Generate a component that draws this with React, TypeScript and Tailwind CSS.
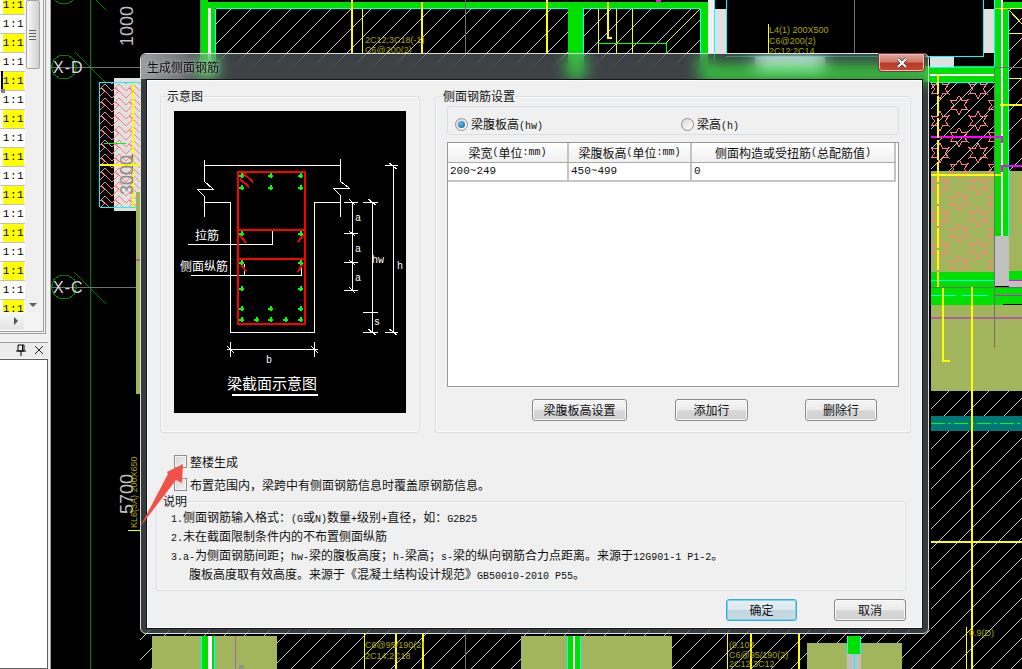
import { Fragment } from "react";

const CJK = "[font-family:'Noto_Sans_CJK_SC',sans-serif]";

// ascii runs are narrower in the original dialog font, so they get their own span
function Mix({ text }: { text: string }) {
  return (
    <>
      {text.split(/([\x00-\x7f]+)/).map((part, i) =>
        /^[\x00-\x7f]+$/.test(part) ? (
          <span key={i} className="whitespace-pre [font-family:'Liberation_Mono',monospace] text-[10px]">
            {part}
          </span>
        ) : (
          <Fragment key={i}>{part}</Fragment>
        ),
      )}
    </>
  );
}

function poly(cx: number, cy: number, r: number, n: number) {
  const pts: string[] = [];
  for (let i = 0; i < n; i++) {
    const a = (i / n) * Math.PI * 2;
    pts.push(`${(cx + r * Math.cos(a)).toFixed(1)},${(cy + r * Math.sin(a)).toFixed(1)}`);
  }
  return pts.join(" ");
}

// six pointed outline used by the slab hatch
function star(cx: number, cy: number) {
  const pts: string[] = [];
  for (let i = 0; i < 12; i++) {
    const a = ((i * 30 - 90) * Math.PI) / 180;
    const r = i % 2 === 0 ? 10 : 5.5;
    pts.push(`${(cx + r * Math.cos(a)).toFixed(1)} ${(cy + r * Math.sin(a)).toFixed(1)}`);
  }
  return `M${pts.join("L")}Z`;
}

function CadCanvas() {
  const mono = "Liberation Sans";
  return (
    <svg viewBox="51 0 971 669" className="block h-full w-full" shapeRendering="crispEdges">
      <defs>
        <pattern id="hatch" width="20" height="20" patternUnits="userSpaceOnUse">
          <path d="M0 20L20 0" stroke="#c8c8c8" strokeWidth="1" fill="none" />
        </pattern>
        <pattern id="stars" width="38" height="32" patternUnits="userSpaceOnUse">
          <path d={`${star(9, 9)}${star(28, 25)}${star(28, -7)}`} stroke="#ff7f7f" fill="none" />
        </pattern>
        <pattern id="herring" width="14" height="14" patternUnits="userSpaceOnUse">
          <path d="M0 7L7 0L14 7M0 14L7 7L14 14M7 0L14 -7M3 4L7 7" stroke="#ff8080" fill="none" />
        </pattern>
      </defs>

      {/* hatched floor areas */}
      <rect x="216" y="9" width="352" height="80" fill="url(#hatch)" />
      <rect x="583" y="9" width="117" height="80" fill="url(#hatch)" />
      <rect x="1009" y="9" width="13" height="162" fill="url(#hatch)" />
      <rect x="931" y="83" width="63" height="88" fill="url(#hatch)" />
      <rect x="931" y="391" width="91" height="278" fill="url(#hatch)" />
      <rect x="140" y="630" width="882" height="39" fill="url(#hatch)" />

      {/* grid axes */}
      <path d="M90 0V669M75 52L105 82M74 272L106 304M96 0L106 10" stroke="#008000" fill="none" />
      <path d="M52 67H140M52 287H140" stroke="#707070" />
      <polygon points={poly(64, 67, 12.5, 10)} fill="none" stroke="#008000" />
      <polygon points={poly(64, 287, 12.5, 10)} fill="none" stroke="#008000" />
      <polygon points={poly(64, -8, 12.5, 10)} fill="none" stroke="#008000" />

      {/* left block */}
      <rect x="114" y="78" width="26" height="133" fill="#e0e0e0" />
      <rect x="100" y="83" width="40" height="124" fill="url(#herring)" />
      <path d="M99.5 207V82H140M99.5 207H140" stroke="#00ffff" fill="none" />
      <path d="M133 83V207" stroke="#ffff00" strokeWidth="2" strokeDasharray="8 1" />
      <path d="M100 165H140" stroke="#ffff00" strokeWidth="2" />
      <path d="M132 155V190" stroke="#2040ff" strokeDasharray="6 5" />
      <path d="M104 143H126" stroke="#00ff00" />
      <rect x="136" y="192" width="4" height="202" fill="#a2b55c" />
      <rect x="136" y="259" width="4" height="2" fill="#b05fa0" />

      {/* top walls */}
      <rect x="200" y="0" width="8" height="80" fill="#00e000" />
      <rect x="208" y="2" width="367" height="6" fill="#00e000" />
      <rect x="208" y="8" width="3" height="72" fill="#ffffff" />
      <rect x="211" y="8" width="4" height="72" fill="#00e000" />
      <rect x="568" y="2" width="9" height="78" fill="#00e000" />
      <rect x="577" y="2" width="131" height="6" fill="#00e000" />
      <rect x="575" y="8" width="8" height="72" fill="#00e000" />
      <rect x="700" y="8" width="8" height="72" fill="#00e000" />
      <rect x="708" y="0" width="6" height="53" fill="#f0f0f0" />
      <rect x="714" y="9" width="12" height="44" fill="#e0e0e0" />
      <path d="M215.5 9V80M216 8.5H568M583.5 9V80M583 8.5H700M700 9V80M714.5 0V60M726.5 0V53" stroke="#00ffff" fill="none" />
      <path d="M200.5 0V53" stroke="#707070" />
      <path d="M465.5 0V53M854.5 0V53" stroke="#707070" />
      <path d="M352 0V53M422 2V53M547 0V53" stroke="#ffff00" strokeWidth="2" />
      <path d="M362.5 9V53M598.5 9V53M616.5 9V53M632.5 9V53M768.5 24V53" stroke="#ffff00" />
      <path d="M608 2V38H612" stroke="#ffff00" strokeWidth="2" fill="none" />
      <path d="M598 43.5H666V53" stroke="#00ff00" fill="none" />
      <path d="M666 43L700 9" stroke="#ffff00" fill="none" />
      <rect x="656" y="0" width="5" height="2" fill="#ff00ff" />

      {/* top right */}
      <rect x="700" y="66" width="294" height="16" fill="#00e000" />
      <rect x="755" y="57" width="70" height="10" fill="#e4f0f8" />
      <rect x="930" y="57" width="24" height="10" fill="#e0e0e0" />
      <rect x="984" y="9" width="10" height="44" fill="#e0e0e0" />
      <rect x="930" y="74" width="64" height="2" fill="#ffffff" />
      <path d="M726 56.5H983.5V0M930 67.5H994M930 82.5H994M994.5 0V236M1008.5 10V236" stroke="#00ffff" fill="none" />
      <rect x="995" y="0" width="6" height="236" fill="#00e000" />
      <rect x="1001" y="0" width="2" height="236" fill="#ffffff" />
      <rect x="1003" y="2" width="5" height="234" fill="#00e000" />
      <rect x="1003" y="2" width="19" height="6" fill="#00e000" />
      <path d="M994 67.5H1022" stroke="#707070" />
      <path d="M995 8.5H1022M1009 33H1022M1009 78H1022" stroke="#ffff00" fill="none" />
      <path d="M1009 10L1022 24" stroke="#ffff00" />

      {/* star hatched slab */}
      <rect x="931" y="171" width="63" height="101" fill="#a2b55c" />
      <rect x="931" y="83" width="63" height="189" fill="url(#stars)" />
      <rect x="931" y="272" width="63" height="15" fill="#00e000" />
      <path d="M931 280.5H994" stroke="#00ffff" />
      <path d="M931 137H1002V143" stroke="#ff00ff" strokeWidth="2" fill="none" />
      <path d="M1022 166H1002V172" stroke="#ff00ff" strokeWidth="2" fill="none" />
      <path d="M931 175H1002M1000 105H1022" stroke="#ffff00" strokeWidth="2" fill="none" />
      <path d="M938 74V287" stroke="#ffff00" strokeWidth="2" strokeDasharray="20 2" />
      <rect x="1009" y="171" width="13" height="100" fill="#a2b55c" />
      <rect x="1009" y="271" width="13" height="9" fill="#00e000" />
      <path d="M1009 280.5H1022" stroke="#ff00ff" />
      <rect x="994" y="236" width="15" height="50" fill="#c0c0c0" />
      <rect x="1009" y="281" width="13" height="6" fill="#c0c0c0" />

      {/* lower right */}
      <rect x="931" y="305" width="91" height="86" fill="#a2b55c" />
      <rect x="931" y="288" width="72" height="17" fill="#00e000" />
      <rect x="1003" y="288" width="19" height="16" fill="#00e000" />
      <path d="M931 287.5H1022" stroke="#707070" />
      <path d="M931 295.5H956M962 295.5H988" stroke="#00ffff" />
      <path d="M995 295.5H1022" stroke="#ff00ff" />
      <rect x="931" y="317" width="91" height="2" fill="#b05fa0" />
      <path d="M943 288V361H950" stroke="#ffff00" strokeWidth="2" fill="none" />
      <path d="M994.5 67V346" stroke="#707070" />
      <rect x="994" y="346" width="1" height="1" fill="#ff0000" />
      <rect x="931" y="416" width="91" height="15" fill="#007878" />
      <path d="M931 423.5H1022" stroke="#00ff00" strokeDasharray="14 3 3 3" />
      <path d="M972 287V669" stroke="#ffff00" strokeWidth="2" />
      <path d="M931 542H1022" stroke="#ffff00" strokeWidth="2" />
      <path d="M966.5 627V669" stroke="#ffff00" />

      {/* bottom columns */}
      <rect x="152" y="636" width="125" height="33" fill="#a2b55c" />
      <rect x="201" y="636" width="14" height="33" fill="#00e000" />
      <rect x="208" y="636" width="4" height="33" fill="#ffffff" />
      <path d="M201.5 636V669M214.5 636V669" stroke="#00ffff" />
      <path d="M235.5 636V669M620.5 636V669M871.5 643V669" stroke="#b05fa0" />
      <rect x="239" y="665" width="5" height="4" fill="#909090" />
      <rect x="521" y="636" width="151" height="33" fill="#a2b55c" />
      <rect x="567" y="636" width="14" height="33" fill="#00e000" />
      <rect x="573" y="636" width="2" height="33" fill="#ffffff" />
      <path d="M567.5 636V669M580.5 636V669" stroke="#00ffff" />
      <rect x="807" y="643" width="95" height="26" fill="#a2b55c" />
      <rect x="847" y="636" width="14" height="18" fill="#00e000" />
      <rect x="847" y="654" width="14" height="15" fill="#c0c0c0" />
      <path d="M847.5 636V654M860.5 636V654M854 654V669" stroke="#00ffff" />
      <path d="M364.5 634V669M727.5 634V669" stroke="#ffff00" />
      <path d="M396 634V669M423 634V669M751 634V669M799 634V669" stroke="#ffff00" strokeWidth="2" />
      <path d="M465.5 634V669" stroke="#707070" />

      {/* drawing texts */}
      <g fontFamily={mono} fontSize="18">
        <text transform="translate(133 46) rotate(-90)" fill="#c0c0c0">1000</text>
        <text transform="translate(133 195) rotate(-90)" fill="#8c8c8c">3000</text>
        <text transform="translate(133 514) rotate(-90)" fill="#c0c0c0">5700</text>
      </g>
      <g fontFamily={mono} fontSize="16" fill="#d8d8d8" letterSpacing="1">
        <text x="53" y="73">X-D</text>
        <text x="53" y="293">X-C</text>
      </g>
      <path d="M128 530H140" stroke="#ffff00" />
      <g fontFamily={mono} fontSize="9" fill="#a8a800">
        <text transform="translate(137 528) rotate(-90)">KL6(3A) 200X650</text>
        <text x="365" y="43">2C12;3C18(-1)</text>
        <text x="365" y="53">C6@200(2)</text>
        <text x="769" y="33">L4(1) 200X500</text>
        <text x="769" y="44">C6@200(2)</text>
        <text x="769" y="54">2C12;2C14</text>
        <text x="365" y="648">C6@95/190(2)</text>
        <text x="365" y="659">2C14;2C18</text>
        <text x="729" y="648">(9.103</text>
        <text x="729" y="658">C6@95/190(2)</text>
        <text x="729" y="667">2C12;3C12</text>
        <text x="969" y="636">0.9(D)</text>
      </g>
    </svg>
  );
}

// beam section sketch, drawn in screen coordinates of the picture box
function BeamSection() {
  const dots = [
    [241, 175], [270, 175], [300, 175],
    [241, 187], [270, 187], [300, 187],
    [241, 233], [300, 233], [241, 262], [300, 262], [241, 288], [300, 288],
    [241, 308], [270, 308], [300, 308],
    [241, 319], [256, 319], [270, 319], [285, 319], [300, 319],
  ];
  return (
    <svg viewBox="174 111 232 302" className="block h-[302px] w-[232px] bg-black" shapeRendering="crispEdges">
      <g stroke="#ffffff" fill="none">
        <path d="M204 165.5H340" />
        <path d="M204 160V181L213 189H197L204 196V217" />
        <path d="M340 159V181L349 188H333L340 195V217" />
        <path d="M204 202.5H230.5V332.5H314.5V202.5H340" />
        <path d="M188 244.5H272.5V230" />
        <path d="M191 275.5H301.5V264M244.5 275V264" />
        <path d="M352.5 202V290M344 202.5H358M344 233.5H358M344 262.5H358M344 290.5H358" />
        <path d="M372.5 202V332M363 202.5H378M363 312.5H378M363 332.5H378" />
        <path d="M393.5 165V332M385 165.5H398M385 332.5H398" />
        <path d="M230.5 342V357M314.5 342V357M227 349.5H318" />
        <path d="M368 199L376 205M368 329L376 335M349 199L355 205M349 287L355 293M349 231L355 236M349 260L355 265M389 163L397 169M389 329L397 335M227 346L234 353M311 346L318 353" />
      </g>
      <g fill="#ffffff" fontFamily="Liberation Mono" fontSize="10" textAnchor="middle">
        <text x="358" y="221">a</text>
        <text x="358" y="252">a</text>
        <text x="358" y="281">a</text>
        <text x="378" y="263">hw</text>
        <text x="377" y="325">s</text>
        <text x="400" y="269">h</text>
        <text x="269" y="363">b</text>
      </g>
      <g fill="#ffffff" fontFamily="Noto Sans CJK SC" textAnchor="middle">
        <text x="207" y="240" fontSize="12">拉筋</text>
        <text x="204" y="271" fontSize="12">侧面纵筋</text>
        <text x="272" y="389" fontSize="15">梁截面示意图</text>
      </g>
      <rect x="232" y="394" width="86" height="2" fill="#ffffff" />
      <g stroke="#ff0000" fill="none" strokeWidth="2">
        <rect x="238" y="172" width="67" height="152" />
        <path d="M238 230H305M238 259H305" />
        <path d="M243 173L253 182M240 179L249 187M240 235L246 243M304 234L298 242M240 263L246 271M303 263L298 272" />
      </g>
      {dots.map(([x, y]) => (
        <path key={`${x}-${y}`} d={`M${x - 2} ${y}H${x + 3}M${x} ${y - 2}V${y + 3}M${x + 1} ${y - 2}V${y + 3}M${x - 2} ${y + 1}H${x + 3}`} stroke="#00ff00" />
      ))}
    </svg>
  );
}

function GroupBox({ label, labelLeft, className, children }: { label: string; labelLeft: string; className: string; children: React.ReactNode }) {
  return (
    <div className={`relative rounded-[3px] border border-[#d5dfe5] shadow-[inset_0_0_0_1px_#fafafa] ${className}`}>
      <span className={`absolute -top-[9px] bg-[#f0f0f0] leading-[16px] ${labelLeft}`}>{label}</span>
      {children}
    </div>
  );
}

function Btn({ label, width, primary }: { label: string; width: string; primary?: boolean }) {
  return (
    <div
      className={`flex h-[22px] items-center justify-center rounded-[3px] border ${width} ${
        primary
          ? "border-[#3aa8d8] bg-[linear-gradient(#e6f1f7_0%,#dbe8ef_48%,#c3d6df_52%,#c8dae2_100%)] shadow-[inset_0_0_0_1px_#7fd0f0]"
          : "border-[#8a8a8a] bg-[linear-gradient(#f4f4f4_0%,#ececec_48%,#d8d8d8_52%,#cfcfcf_100%)] shadow-[inset_0_0_0_1px_#fafafa]"
      }`}
    >
      {label}
    </div>
  );
}

function Radio({ checked, label }: { checked?: boolean; label: string }) {
  return (
    <div className="flex items-center gap-[3px]">
      <span className="flex h-[13px] w-[13px] items-center justify-center rounded-full border border-[#8e8f8f] bg-[linear-gradient(135deg,#d8d8d8,#ffffff)]">
        {checked && <span className="h-[7px] w-[7px] rounded-full bg-[radial-gradient(circle_at_40%_35%,#5cc0ee,#0a5f9a)]" />}
      </span>
      <span className="leading-none">
        <Mix text={label} />
      </span>
    </div>
  );
}

function Check({ label }: { label: string }) {
  return (
    <div className="flex h-[13px] items-center gap-[3px]">
      <span className="h-[13px] w-[13px] border border-[#8e8f8f] bg-[linear-gradient(135deg,#d4d4d4,#f4f4f4)] shadow-[inset_0_0_0_1px_#f4f4f4]" />
      <span className="whitespace-pre">{label}</span>
    </div>
  );
}

function RebarTable() {
  const grid = "grid grid-cols-[121px_123px_204px]";
  const headers = ["梁宽(单位:mm)", "梁腹板高(单位:mm)", "侧面构造或受扭筋(总配筋值)"];
  const row = ["200~249", "450~499", "0"];
  return (
    <div className="mt-[7px] h-[245px] w-[452px] border border-[#9a9a9a] bg-white">
      <div className={`${grid} h-[20px] w-[448px] border-b border-[#a8a8a8] bg-[linear-gradient(#ffffff,#f0f0f0)]`}>
        {headers.map((h) => (
          <div key={h} className="flex items-center justify-center border-r-2 border-[#c4c4c4] leading-none">
            <Mix text={h} />
          </div>
        ))}
      </div>
      <div className={`${grid} h-[19px] w-[448px] border-b-2 border-[#c4c4c4]`}>
        {row.map((c, i) => (
          <div key={i} className="flex items-center border-r-2 border-[#c4c4c4] pl-[2px] text-[11px] [font-family:'Liberation_Mono',monospace]">
            {c}
          </div>
        ))}
      </div>
    </div>
  );
}

function Dialog() {
  const notes = [
    "1.侧面钢筋输入格式：(G或N)数量+级别+直径，如：G2B25",
    "2.未在截面限制条件内的不布置侧面纵筋",
    "3.a-为侧面钢筋间距；hw-梁的腹板高度；h-梁高；s-梁的纵向钢筋合力点距离。来源于12G901-1 P1-2。",
    "   腹板高度取有效高度。来源于《混凝土结构设计规范》GB50010-2010 P55。",
  ];
  return (
    <div className={`absolute left-[140px] top-[53px] flex h-[581px] w-[789px] flex-col rounded-[6px] border border-[#d6dede] bg-[#b8c8d0]/30 text-[12px] text-[#111] backdrop-blur-[8px] ${CJK}`}>
      <div className="relative flex h-[25px] items-center rounded-t-[6px] bg-[linear-gradient(90deg,#ffffff80_0%,#ffffff50_5%,#ffffff00_9%)] pl-[6px] [text-shadow:0_0_5px_#ffffffa0]">
        生成侧面钢筋
        <div className="absolute -top-px right-[3px] flex h-[19px] w-[47px] items-center justify-center rounded-b-[4px] border border-[#7a3a30] bg-[linear-gradient(#dda89e_0%,#d07a6a_45%,#b93a26_55%,#c24a34_100%)] shadow-[inset_0_0_0_1px_#e8c0b8]">
          <svg viewBox="0 0 12 12" className="h-[12px] w-[12px]">
            <path d="M2 2L10 10M10 2L2 10" stroke="#3a3a3a" strokeWidth="3.4" />
            <path d="M2 2L10 10M10 2L2 10" stroke="#ffffff" strokeWidth="2" />
          </svg>
        </div>
      </div>
      <div className="mx-[5px] flex h-[550px] flex-col border border-[#10181c] bg-[#f0f0f0] shadow-[inset_0_0_0_1px_#ffffff]">
        <div className="ml-[13px] mt-[16px] flex h-[337px] gap-[15px]">
          <GroupBox label="示意图" labelLeft="left-[6px]" className="w-[260px] pl-[13px] pt-[14px]">
            <BeamSection />
          </GroupBox>
          <GroupBox label="侧面钢筋设置" labelLeft="left-[7px]" className="w-[476px] pl-[11px] pt-[9px]">
            <div className="flex h-[29px] w-[452px] items-center rounded-[3px] border border-[#d5dfe5] pl-[7px] pt-[8px]">
              <div className="w-[226px]">
                <Radio checked label="梁腹板高(hw)" />
              </div>
              <Radio label="梁高(h)" />
            </div>
            <RebarTable />
            <div className="ml-[85px] mt-[12px] flex">
              <Btn label="梁腹板高设置" width="w-[95px]" />
              <div className="w-[48px]" />
              <Btn label="添加行" width="w-[73px]" />
              <div className="w-[57px]" />
              <Btn label="删除行" width="w-[72px]" />
            </div>
          </GroupBox>
        </div>
        <div className="ml-[27px] mt-[22px] flex flex-col gap-[10px]">
          <Check label="整楼生成" />
          <Check label="布置范围内，梁跨中有侧面钢筋信息时覆盖原钢筋信息。" />
        </div>
        <GroupBox label="说明" labelLeft="left-[6px]" className="ml-[9px] mt-[10px] h-[90px] w-[750px] pl-[14px] pt-[5px]">
          {notes.map((n) => (
            <div key={n} className="h-[19px] whitespace-pre leading-[19px]">
              <Mix text={n} />
            </div>
          ))}
        </GroupBox>
        <div className="mr-[16px] mt-[8px] flex justify-end gap-[37px]">
          <Btn primary label="确定" width="w-[71px]" />
          <Btn label="取消" width="w-[72px]" />
        </div>
      </div>
    </div>
  );
}

function LeftPanel() {
  const rows = Array.from({ length: 17 }, (_, i) => i);
  return (
    <aside className="flex h-full w-[51px] shrink-0 flex-col border-r border-[#a0a0a0] bg-[#f0f0f0]">
      <div className="flex h-[334px] w-[46px] flex-col border-b-[3px] border-r-[3px] border-double border-[#a0a0a0] bg-[#f4f4f4]">
        <div className="flex h-[312px]">
          <div className="relative h-full w-[25px] overflow-hidden bg-white">
            <div className="-mt-[4px]">
              {rows.map((i) => (
                <div key={i} className="flex h-[19px] border-b border-[#c0c0c0]">
                  <div className={`ml-[3px] flex w-[21px] items-center justify-center text-[11px] tracking-[0.5px] text-black [font-family:'Liberation_Mono',monospace] ${i % 2 === 0 ? "bg-[#ffff00]" : "bg-white"}`}>
                    1:1
                  </div>
                </div>
              ))}
            </div>
            <div className="absolute left-px top-[71px] h-[18px] w-[2px] bg-black" />
            <div className="absolute left-[1px] top-[89px] h-[4px] w-[4px] bg-[#808080]" />
          </div>
          <div className="flex h-full w-[15px] flex-col items-center justify-between bg-[#f0f0f0]">
            <div className="flex h-[69px] w-[14px] flex-col items-center justify-center gap-[2px] rounded-[2px] border border-[#a8a8a8] bg-[linear-gradient(90deg,#f8f8f8,#d0d0d0)]">
              <span className="h-px w-[7px] bg-[#606060]" />
              <span className="h-px w-[7px] bg-[#606060]" />
              <span className="h-px w-[7px] bg-[#606060]" />
              <span className="h-px w-[7px] bg-[#606060]" />
            </div>
            <div className="mb-[5px] h-0 w-0 border-x-[4px] border-t-[4px] border-x-transparent border-t-[#606060]" />
          </div>
        </div>
        <div className="flex h-[17px] w-[24px] items-center justify-end bg-[linear-gradient(#f8f8f8,#e4e4e4)] pr-[6px]">
          <div className="h-0 w-0 border-y-[4px] border-l-[4px] border-y-transparent border-l-[#505050]" />
        </div>
      </div>
      <div className="mt-[8px] flex h-[15px] w-[48px] items-center justify-end gap-[8px] border-t border-[#a0a0a0] bg-[#ececec] pr-[4px]">
        <svg viewBox="0 0 10 12" className="h-[12px] w-[10px]">
          <path d="M2 1H8V7H2ZM0 7H10M5 7V12M6.5 1V7" stroke="#000" fill="none" />
        </svg>
        <svg viewBox="0 0 10 10" className="h-[10px] w-[10px]">
          <path d="M1 1L9 9M9 1L1 9" stroke="#202020" fill="none" />
        </svg>
      </div>
      <div className="mt-[2px] w-[48px] flex-1 border border-l-0 border-[#606060] bg-white" />
    </aside>
  );
}

export default function App() {
  return (
    <div className="relative flex h-[669px] w-[1022px] overflow-hidden bg-black">
      <LeftPanel />
      <main className="h-full grow">
        <CadCanvas />
      </main>
      <Dialog />
      {/* red annotation arrow drawn over the dialog */}
      <svg viewBox="0 0 46 66" className="absolute left-[139px] top-[463px] h-[66px] w-[46px]">
        <path d="M1 64L29 11L28 9L44 1L43 20L37 17Z" fill="#f0524a" />
      </svg>
    </div>
  );
}
